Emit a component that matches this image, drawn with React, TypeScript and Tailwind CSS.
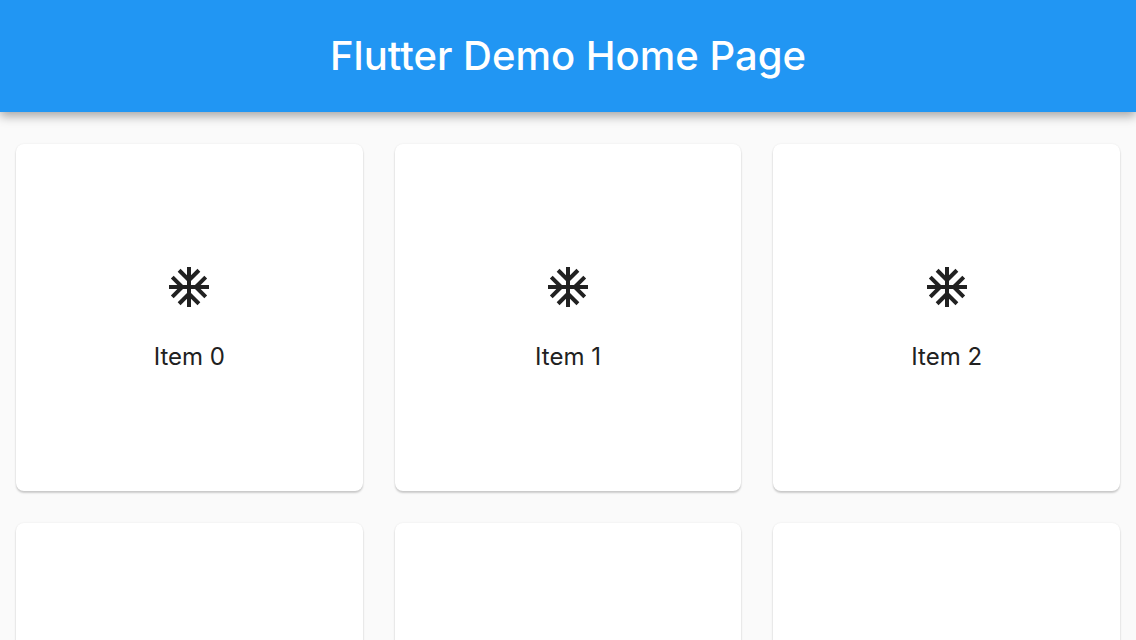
import { MdAcUnit } from "react-icons/md";

const items = Array.from({ length: 6 }, (_, i) => `Item ${i}`);

export default function App() {
  return (
    <div className="flex h-screen flex-col overflow-hidden bg-[#fafafa] font-['Inter',sans-serif] text-[#212121]">
      <header className="z-10 flex h-28 shrink-0 items-center justify-center bg-[#2196f3] shadow-[0_4px_10px_rgba(0,0,0,0.35)]">
        <h1 className="text-[40px] font-medium text-white">Flutter Demo Home Page</h1>
      </header>
      <main className="min-h-0 flex-1 overflow-y-auto px-4 py-8 [scrollbar-width:none]">
        <ul className="grid grid-cols-3 gap-8">
          {items.map((item) => (
            <li
              key={item}
              className="flex aspect-square flex-col items-center justify-center gap-8 rounded-lg bg-white shadow-[0_2px_2px_rgba(0,0,0,0.18),0_0_2px_rgba(0,0,0,0.08)]"
            >
              <MdAcUnit className="size-12" aria-hidden="true" />
              <p className="text-2xl leading-7">{item}</p>
            </li>
          ))}
        </ul>
      </main>
    </div>
  );
}
